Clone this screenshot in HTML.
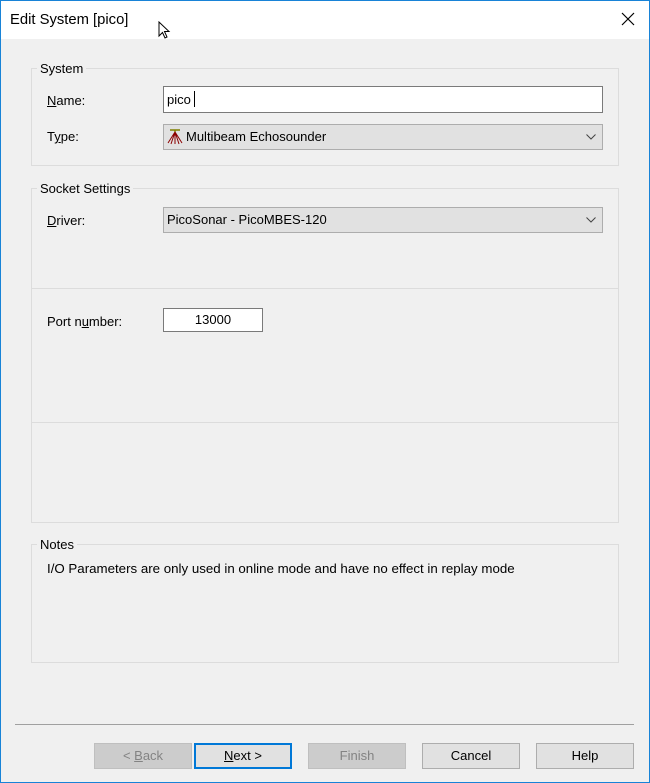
<!DOCTYPE html>
<html><head><style>
*{box-sizing:border-box;margin:0;padding:0}
body{width:650px;height:783px;background:#f0f0f0;font-family:"Liberation Sans",sans-serif;font-size:13px;color:#000;position:relative;overflow:hidden}
.win{position:absolute;left:0;top:0;width:650px;height:783px;border:1px solid #1883d7;background:#f0f0f0}
.title{position:absolute;left:0;top:0;width:648px;height:38px;background:#fff}
.title span{position:absolute;left:9px;top:11px;font-size:14.8px}
.x{position:absolute;left:620px;top:11px}
.a{position:absolute}
.grp{position:absolute;border:1px solid #dcdcdc}
.lg{position:absolute;background:#f0f0f0;padding:0 3px;font-size:13px}
.hl{position:absolute;height:1px;background:#dcdcdc}
.inp{position:absolute;background:#fff;border:1px solid #7a7a7a}
.cmb{position:absolute;background:#e1e1e1;border:1px solid #adadad}
.btn{position:absolute;top:743px;width:98px;height:26px;background:#e1e1e1;border:1px solid #adadad;text-align:center;line-height:24px;font-size:13px}
.dis{background:#cccccc;border-color:#bfbfbf;color:#838383}
u{text-decoration:underline}
</style></head><body>
<div class="win">
<div class="title"><span>Edit System [pico]</span>
<svg class="x" width="14" height="14"><path d="M1 1L13 13M13 1L1 13" stroke="#000" stroke-width="1.2"/></svg>
<svg class="a" style="left:157px;top:20px" width="14" height="20"><path d="M1 1L1 15L4.5 11.5L7 17L9 16L6.5 10.5L11 10.5Z" fill="#fff" stroke="#000" stroke-width="1"/></svg>
</div>
</div>
<div class="grp" style="left:31px;top:68px;width:588px;height:98px"></div>
<div class="lg" style="left:37px;top:61px">System</div>
<div class="a" style="left:47px;top:93px"><u>N</u>ame:</div>
<div class="inp" style="left:163px;top:86px;width:440px;height:27px"><span class="a" style="left:3px;top:5px">pico</span><div class="a" style="left:30px;top:4px;width:1px;height:16px;background:#000"></div></div>
<div class="a" style="left:47px;top:129px">T<u>y</u>pe:</div>
<div class="cmb" style="left:163px;top:124px;width:440px;height:26px">
<svg class="a" style="left:2px;top:4px" width="18" height="16"><path d="M4 1H14M9 1V3" stroke="#808000" stroke-width="1.5"/><path d="M9 3L2 14M9 3L5 15M9 3L9 15M9 3L13 15M9 3L16 14" stroke="#8b0000" stroke-width="1"/></svg>
<span class="a" style="left:22px;top:4px">Multibeam Echosounder</span>
<svg class="a" style="left:422px;top:9px" width="10" height="6"><path d="M0.5 0.5L5 5L9.5 0.5" fill="none" stroke="#444"/></svg></div>

<div class="grp" style="left:31px;top:188px;width:588px;height:335px"></div>
<div class="hl" style="left:32px;top:288px;width:586px"></div>
<div class="hl" style="left:32px;top:422px;width:586px"></div>
<div class="lg" style="left:37px;top:181px">Socket Settings</div>
<div class="a" style="left:47px;top:213px"><u>D</u>river:</div>
<div class="cmb" style="left:163px;top:207px;width:440px;height:26px">
<span class="a" style="left:3px;top:4px">PicoSonar - PicoMBES-120</span>
<svg class="a" style="left:422px;top:9px" width="10" height="6"><path d="M0.5 0.5L5 5L9.5 0.5" fill="none" stroke="#444"/></svg></div>
<div class="a" style="left:47px;top:314px">Port n<u>u</u>mber:</div>
<div class="inp" style="left:163px;top:308px;width:100px;height:24px;text-align:center;line-height:22px">13000</div>

<div class="grp" style="left:31px;top:544px;width:588px;height:119px"></div>
<div class="lg" style="left:37px;top:537px">Notes</div>
<div class="a" style="left:47px;top:561px;font-size:13.3px">I/O Parameters are only used in online mode and have no effect in replay mode</div>

<div class="a" style="left:15px;top:724px;width:619px;height:1px;background:#a0a0a0"></div>
<div class="btn dis" style="left:94px">&lt; <u>B</u>ack</div>
<div class="btn" style="left:194px;border:2px solid #0078d7;line-height:22px"><u>N</u>ext &gt;</div>
<div class="btn dis" style="left:308px">Finish</div>
<div class="btn" style="left:422px">Cancel</div>
<div class="btn" style="left:536px">Help</div>
</body></html>
